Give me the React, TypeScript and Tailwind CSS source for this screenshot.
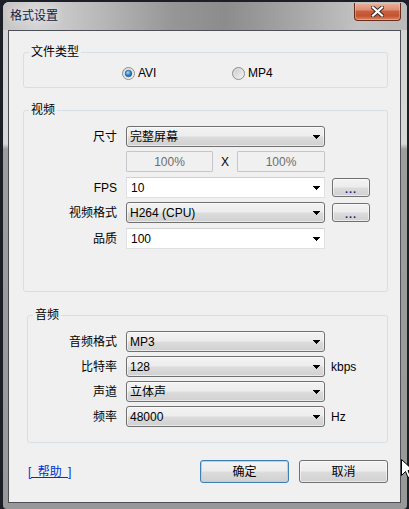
import React from "react";

const Arrow = () => (
  <svg width="7" height="4" viewBox="0 0 7 4" shapeRendering="crispEdges" className="shrink-0">
    <path d="M0 0H7V1H6V2H5V3H4V4H3V3H2V2H1V1H0Z" fill="#000" />
  </svg>
);

function Combo({ value, editable }: { value: string; editable?: boolean }) {
  return (
    <div
      className={
        editable
          ? "w-[199px] h-[21px] flex items-center justify-between pl-[4px] pr-[4px] bg-white border border-[#dfe0e4] border-t-[#cfd0d4]"
          : "w-[199px] h-[21px] flex items-center justify-between pl-[3px] pr-[4px] rounded-[3px] border border-[#707070] bg-[linear-gradient(to_bottom,#f3f3f3_0%,#ececec_48%,#dcdcdc_52%,#d0d0d0_100%)] shadow-[inset_0_0_0_1px_rgba(255,255,255,0.55)]"
      }
    >
      <span className="leading-[16px] whitespace-nowrap">{value}</span>
      <Arrow />
    </div>
  );
}

function DotsButton() {
  return (
    <div className="ml-[7px] w-[38px] h-[19px] rounded-[3px] border border-[#707070] bg-[linear-gradient(to_bottom,#f3f3f3_0%,#ececec_48%,#dcdcdc_52%,#d0d0d0_100%)] shadow-[inset_0_0_0_1px_rgba(255,255,255,0.55)] flex items-end justify-center pb-[1px]">
      <span className="text-[11px] leading-[12px] font-bold text-[#14207a] tracking-[1px]">...</span>
    </div>
  );
}

function Row({
  label,
  labelW,
  children,
  extra,
  className,
}: {
  label?: string;
  labelW: string;
  children: React.ReactNode;
  extra?: React.ReactNode;
  className?: string;
}) {
  return (
    <div className={"flex items-center h-[21px] " + (className ?? "")}>
      <div className={labelW + " text-right pr-[1px] whitespace-nowrap leading-[16px]"}>{label}</div>
      <div className="ml-[8px] flex items-center">{children}</div>
      {extra}
    </div>
  );
}

function Radio({ checked }: { checked?: boolean }) {
  return (
    <svg width="13" height="13" viewBox="0 0 13 13" className="shrink-0">
      <defs>
        <linearGradient id={checked ? "rg1" : "rg2"} x1="0" y1="0" x2="1" y2="1">
          <stop offset="0" stopColor={checked ? "#d4d4d4" : "#c4c4c4"} />
          <stop offset="1" stopColor="#fafafa" />
        </linearGradient>
        <radialGradient id="dot" cx="0.4" cy="0.35" r="0.7">
          <stop offset="0" stopColor="#a9dcf6" />
          <stop offset="0.5" stopColor="#3f8fd2" />
          <stop offset="1" stopColor="#1b4f8a" />
        </radialGradient>
      </defs>
      <circle cx="6.5" cy="6.5" r="6" fill={checked ? "url(#rg1)" : "url(#rg2)"} stroke="#8c8e90" strokeWidth="1" />
      <circle cx="6.5" cy="6.5" r="4.5" fill="none" stroke="#e8e8e8" strokeWidth="0.8" />
      {checked && <circle cx="6.5" cy="6.5" r="3.3" fill="url(#dot)" stroke="#24598e" strokeWidth="0.7" />}
    </svg>
  );
}

export default function App() {
  return (
    <div className="relative w-[409px] h-[509px] overflow-hidden bg-[#1c2026] font-['Liberation_Sans','Noto_Sans_CJK_SC',sans-serif] text-[12px] text-black">
      <div className="ml-[3px] mt-[2px] w-[404px] h-[507px] rounded-t-[6px] rounded-b-[4px] flex flex-col bg-[linear-gradient(to_bottom,#d2d2d2_0%,#d8d8d8_28%,#9e9e9e_29%,#989898_100%)]">
        {/* title bar */}
        <div className="h-[28px] shrink-0 flex items-start justify-between rounded-t-[6px] bg-[linear-gradient(to_right,#c4c4c4_0%,#d4d4d4_8%,#b8b8b8_24%,#969696_42%,#8c8c8c_55%,#a6a6a6_72%,#c2c2c2_88%,#bababa_100%)]">
          <div className="pl-[7px] pt-[6px] leading-[16px] text-[12px] text-[#15203f] [text-shadow:0_0_8px_rgba(255,255,255,0.95)]">
            格式设置
          </div>
          <div className="mr-[6px] mt-[1px] w-[47px] h-[18px] rounded-b-[4px] border border-[#6b2c1c] border-t-0 bg-[linear-gradient(to_bottom,#eab09a_0%,#df9176_38%,#c9603f_50%,#c4522f_75%,#d88864_100%)] shadow-[inset_0_0_0_1px_rgba(255,220,200,0.35)] flex items-center justify-center">
            <svg width="13" height="11" viewBox="0 0 13 11">
              <path d="M2 1.5L11 9.5M11 1.5L2 9.5" stroke="#3b2a26" strokeWidth="4" strokeLinecap="square" />
              <path d="M2 1.5L11 9.5M11 1.5L2 9.5" stroke="#ffffff" strokeWidth="2.2" strokeLinecap="square" />
            </svg>
          </div>
        </div>

        {/* middle */}
        <div className="flex pl-[5px]">
          <div className="w-[393px] h-[473px] border border-[#4d5157] bg-[#f0f0f0] pl-[14px] pr-[12px] pt-[13px] flex flex-col">
            {/* file type */}
            <fieldset className="border border-[#d5dfe5] rounded-[3px] pt-[5px] pb-[6px]">
              <legend className="ml-[5px] px-[2px] leading-[16px]">文件类型</legend>
              <div className="flex h-[16px] items-center pl-[98px]">
                <div className="w-[110px] flex items-center gap-[3px]">
                  <Radio checked />
                  <span className="leading-[16px]">AVI</span>
                </div>
                <div className="flex items-center gap-[3px]">
                  <Radio />
                  <span className="leading-[16px]">MP4</span>
                </div>
              </div>
            </fieldset>

            {/* video */}
            <fieldset className="mt-[14px] border border-[#d5dfe5] rounded-[3px] pt-[8px] pb-[42px]">
              <legend className="ml-[5px] px-[2px] leading-[16px]">视频</legend>
              <Row label="尺寸" labelW="w-[94px]">
                <Combo value="完整屏幕" />
              </Row>
              <Row labelW="w-[94px]" className="mt-[4px]">
                <div className="flex items-center">
                  <div className="w-[87px] h-[21px] border border-[#c3c7cb] rounded-[1px] bg-[#f0f0f0] flex items-center justify-center text-[#6d6d6d] leading-[16px]">
                    100%
                  </div>
                  <div className="w-[24px] text-center leading-[16px]">X</div>
                  <div className="w-[88px] h-[21px] border border-[#c3c7cb] rounded-[1px] bg-[#f0f0f0] flex items-center justify-center text-[#6d6d6d] leading-[16px]">
                    100%
                  </div>
                </div>
              </Row>
              <Row label="FPS" labelW="w-[94px]" className="mt-[5px]" extra={<DotsButton />}>
                <Combo value="10" editable />
              </Row>
              <Row label="视频格式" labelW="w-[94px]" className="mt-[4px]" extra={<DotsButton />}>
                <Combo value="H264 (CPU)" />
              </Row>
              <Row label="品质" labelW="w-[94px]" className="mt-[5px]">
                <Combo value="100" editable />
              </Row>
            </fieldset>

            {/* audio */}
            <fieldset className="ml-[4px] mt-[15px] border border-[#d5dfe5] rounded-[3px] pt-[8px] pb-[15px]">
              <legend className="ml-[5px] px-[2px] leading-[16px]">音频</legend>
              <Row label="音频格式" labelW="w-[90px]">
                <Combo value="MP3" />
              </Row>
              <Row
                label="比特率"
                labelW="w-[90px]"
                className="mt-[4px]"
                extra={<span className="ml-[6px] leading-[16px]">kbps</span>}
              >
                <Combo value="128" />
              </Row>
              <Row label="声道" labelW="w-[90px]" className="mt-[4px]">
                <Combo value="立体声" />
              </Row>
              <Row
                label="频率"
                labelW="w-[90px]"
                className="mt-[4px]"
                extra={<span className="ml-[6px] leading-[16px]">Hz</span>}
              >
                <Combo value="48000" />
              </Row>
            </fieldset>

            {/* bottom buttons */}
            <div className="mt-[17px] h-[23px] flex items-center">
              <span className="ml-[5px] text-[#0033cc] underline leading-[16px] whitespace-pre [word-spacing:3px]">[ 帮助 ]</span>
              <div className="ml-auto flex">
                <div className="w-[89px] h-[23px] rounded-[3px] border border-[#3c7fb1] bg-[linear-gradient(to_bottom,#f3f3f3_0%,#ececec_48%,#dcdcdc_52%,#d0d0d0_100%)] shadow-[inset_0_0_0_1px_#a9d6f3] flex items-center justify-center leading-[16px]">
                  确定
                </div>
                <div className="ml-[10px] w-[89px] h-[23px] rounded-[3px] border border-[#707070] bg-[linear-gradient(to_bottom,#f3f3f3_0%,#ececec_48%,#dcdcdc_52%,#d0d0d0_100%)] shadow-[inset_0_0_0_1px_rgba(255,255,255,0.55)] flex items-center justify-center leading-[16px]">
                  取消
                </div>
              </div>
            </div>
          </div>
        </div>
      </div>

      {/* mouse cursor overlay */}
      <svg className="absolute left-[401px] top-[459px]" width="12" height="20" viewBox="0 0 12 20">
        <path d="M0.5 0.5V16.5L4.5 12.5L7 18.5L9.5 17.5L7 11.5H12.5Z" fill="#fff" stroke="#000" strokeWidth="1" />
      </svg>
    </div>
  );
}
